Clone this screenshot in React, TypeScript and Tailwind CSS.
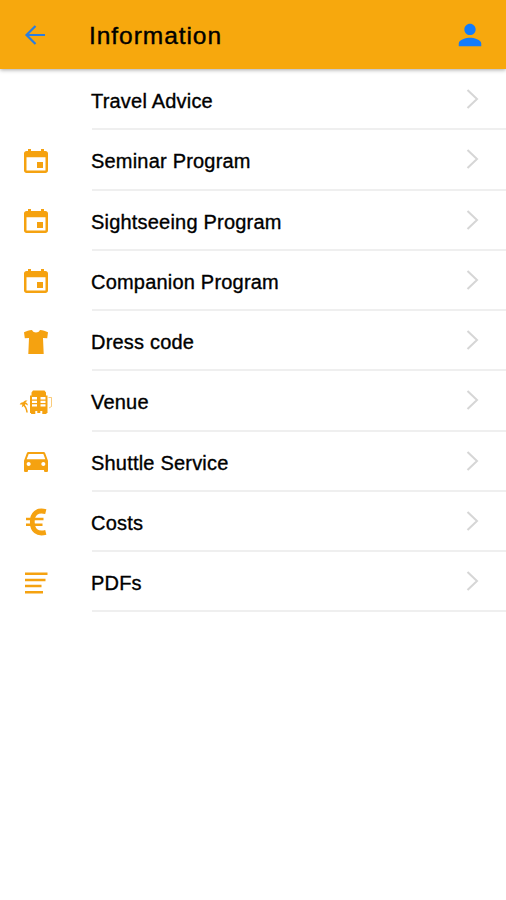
import type { ReactNode } from "react";
import { IoMdCalendar, IoMdCar, IoMdPerson } from "react-icons/io";

const BackIcon = () => (
  <svg width="30" height="30" viewBox="0 0 30 30" fill="none">
    <path d="M25 15H7M15.500 6 6.500 15l9 9" stroke="currentColor" strokeWidth="2.200" />
  </svg>
);

const ShirtIcon = () => (
  <svg width="26" height="26" viewBox="0 0 26 26" fill="currentColor">
    <path d="M9 1c1 1.800 2.300 2.500 4 2.500S16 2.800 17 1c3 .2 5.500 1.200 8 2.300l-.8 6-4.200-.3.700 16H5.300L6 9l-4.200.3-.8-6C3.500 2.200 6 1.200 9 1z" />
  </svg>
);

const VenueIcon = () => (
  <svg width="34" height="26" viewBox="0 0 34 26" fill="currentColor">
    {/* Hotel */}
    <path
      fillRule="evenodd"
      d="M12.500 3.500 14 1.500h11.500L27 3.500v3h1.500V24h-1v1h-4.200v-3h-2v2h-3v-2h-2v3h-4.200v-1H11V6.500h1.500zM13 8v2.500h5V8zm8.500 0v2.500h5V8zM13 11.700v2.200h5v-2.200zm8.500 0v2.200h5v-2.200zM13 15.200v2.300h5v-2.300zm8.500 0v2.300h5v-2.300z"
    />
    {/* Palm tree */}
    <path d="M.7 15.500c.7-1.500 2-2.300 3.500-2.200 1-1.700 2.700-2.300 4.300-1.600l-2.200 1.600c1.600.4 2.700 1.700 2.500 3.300l-2.500-1.600-.3 1.300c1.700 2 2.500 4.700 2.800 7.200H7.300c-.3-2.600-1.200-4.900-2.800-6.500l-1.800 1.500.7-3z" />
    {/* Signboard */}
    <path
      d="M29.500 8.500h3v9L30 19"
      fill="none"
      stroke="currentColor"
      opacity="0.55"
    />
  </svg>
);

const EuroIcon = () => (
  <svg width="22" height="28" viewBox="0 0 22 28" fill="none" stroke="currentColor">
    <path
      d="M20.800 3.600C12 1.400 7.300 5.500 7.300 14s4.700 12.600 13.500 10.400"
      strokeWidth="4.800"
    />
    <path d="M1 11H18.500M1 16.700H17.500" strokeWidth="2.500" />
  </svg>
);

const LinesIcon = () => (
  <svg width="24" height="24" viewBox="0 0 24 24" fill="currentColor">
    <path d="M1 1.500h22.500v2.500H1zM1 7.800h20.500v2.500H1zM1 13.800h16.500v2.500H1zM1 19.900h18v2.500H1z" />
  </svg>
);

type Item = { label: string; icon?: ReactNode };

const items: Item[] = [
  { label: "Travel Advice" },
  { label: "Seminar Program", icon: <IoMdCalendar size={32} /> },
  { label: "Sightseeing Program", icon: <IoMdCalendar size={32} /> },
  { label: "Companion Program", icon: <IoMdCalendar size={32} /> },
  { label: "Dress code", icon: <ShirtIcon /> },
  { label: "Venue", icon: <VenueIcon /> },
  { label: "Shuttle Service", icon: <IoMdCar size={32} /> },
  { label: "Costs", icon: <EuroIcon /> },
  { label: "PDFs", icon: <LinesIcon /> },
];

const App = () => {
  return (
    <div className="min-h-screen bg-white font-['Liberation_Sans',Arial,sans-serif] text-black">
      {/* Header */}
      <header className="flex h-[69px] items-center bg-[#f7a80d] pr-[21px] pl-5 shadow-[0_1px_4px_rgba(0,0,0,0.35)]">
        <button className="mr-[39px] text-[#2b7de0]" aria-label="Back">
          <BackIcon />
        </button>
        <h1 className="flex-1 pt-1 text-[24.5px] tracking-[0.95px] [-webkit-text-stroke:0.4px_black]">
          Information
        </h1>
        <button className="text-[#127cfb]" aria-label="Profile">
          <IoMdPerson size={30} />
        </button>
      </header>

      {/* Menu */}
      <ul className="pt-px">
        {items.map((item) => (
          <li key={item.label} className="flex h-[60.25px] items-stretch">
            <div className="flex w-[72px] items-center justify-center pt-px text-[#f5a210]">
              {item.icon}
            </div>
            <div className="ml-5 flex flex-1 items-center justify-between border-b-2 border-[#efefef] pr-[27px]">
              <span className="-ml-px pt-1 text-xl tracking-[0.2px] [-webkit-text-stroke:0.35px_black]">
                {item.label}
              </span>
              <svg width="13" height="20" viewBox="0 0 13 20" fill="none">
                <path d="M1.500 1 11 10l-9.500 9" stroke="#d6d6d6" strokeWidth="2" />
              </svg>
            </div>
          </li>
        ))}
      </ul>
    </div>
  );
};

export default App;
